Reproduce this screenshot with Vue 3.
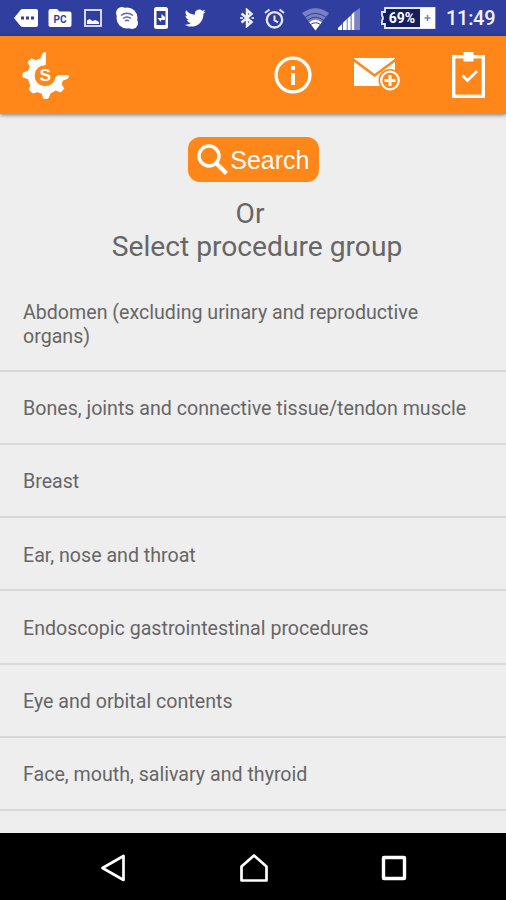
<script setup>
const groups = [
  'Abdomen (excluding urinary and reproductive organs)',
  'Bones, joints and connective tissue/tendon muscle',
  'Breast',
  'Ear, nose and throat',
  'Endoscopic gastrointestinal procedures',
  'Eye and orbital contents',
  'Face, mouth, salivary and thyroid',
]
</script>

<template>
  <div class="screen">
    <header class="status">
      <div class="notifications">
        <svg width="26" height="20" viewBox="0 0 26 20">
          <path d="M1 10 7.500 2Q8.500 1 10 1H23Q25 1 25 3V17Q25 19 23 19H10Q8.500 19 7.500 18Z" fill="#fff" />
          <path d="M8 8.500h3v3H8zM13 8.500h3v3h-3zM18 8.500h3v3h-3z" fill="#303f9f" />
        </svg>
        <svg class="folder" width="24" height="20" viewBox="0 0 24 20">
          <path d="M0.500 3Q0.500 1 2.500 1H9l2.500 2.500H21.500Q23.500 3.500 23.500 5.500V17Q23.500 19 21.500 19H2.500Q.500 19 .500 17Z" fill="#fff" />
          <text x="12" y="15" text-anchor="middle" class="folder-text">PC</text>
        </svg>
        <svg class="picture" width="18" height="18" viewBox="0 0 18 18">
          <rect x="1" y="1" width="16" height="16" fill="#303f9f" stroke="#e8eaf8" stroke-width="1.800" />
          <path d="M3 11.500 5.500 10l3 2 3-1 3.500 2v2H3Z" fill="#fff" />
        </svg>
        <svg class="hotspot" width="24" height="24" viewBox="0 0 24 24">
          <circle cx="12" cy="12" r="10.500" fill="#fff" />
          <circle cx="7" cy="7" r="6" fill="#fff" />
          <circle cx="17" cy="17" r="6" fill="#fff" />
          <path d="M6 9.500Q12 5 18 9.500M8 12.500Q12 9.500 16 12.500M10 15Q12 13.500 14 15" fill="none" stroke="#5b67b4" stroke-width="1.500" />
        </svg>
        <svg class="phone" width="16" height="24" viewBox="0 0 16 24">
          <rect x="1" y="1" width="14" height="22" rx="2.500" fill="#fff" />
          <path d="M3.500 5h9v14h-9z" fill="#303f9f" />
          <path d="M4.500 12h4V8l3.500 3v3H8v2Z" fill="#fff" />
        </svg>
        <svg class="bird" width="22" height="20" viewBox="0 0 24 20">
          <path d="M23.600 2.900c-.8.400-1.700.6-2.700.8 1-.6 1.700-1.500 2.100-2.600-.9.500-1.900.9-3 1.100A4.700 4.700 0 0 0 12 6.500c-4-.2-7.400-2-9.700-4.900-1.200 2.200-.6 4.900 1.500 6.300-.8 0-1.500-.2-2.200-.6 0 2.400 1.600 4.300 3.800 4.800-.7.200-1.400.2-2.100.1.600 1.900 2.300 3.200 4.400 3.300A9.600 9.600 0 0 1 .7 17.400c9.700 5.500 20.600-.9 20.500-12 1-.6 1.800-1.500 2.400-2.500Z" fill="#fff" />
        </svg>
      </div>
      <div class="system">
        <svg class="bluetooth" width="14" height="20" viewBox="0 0 14 20">
          <path d="M1.500 5.500 11.500 14 7 18V2L11.500 6 1.500 14.500" fill="none" stroke="#eef0fa" stroke-width="2.500" />
          <path d="M0 9h3v2H0zM11.500 9h2.500v2h-2.500z" fill="#c5cae9" />
        </svg>
        <svg class="alarm" width="21" height="21" viewBox="0 0 21 21">
          <circle cx="10.500" cy="11.800" r="7.700" fill="none" stroke="#e6e8f6" stroke-width="2.300" />
          <path d="M1 5 5.500 1.500M15.500 1.500 20 5M10.500 7.500v4.800l3.500 2" fill="none" stroke="#e6e8f6" stroke-width="2" />
        </svg>
        <svg class="wifi" width="27" height="23" viewBox="0 0 27 23">
          <path d="M0 5Q13.500-4.500 27 5L13.500 22.500Z" fill="#7781c3" />
          <path d="M3 9.200Q13.500 1.500 24 9.200" fill="none" stroke="#303f9f" stroke-width="1" />
          <path d="M5.500 12.300Q13.500 6 21.500 12.300" fill="none" stroke="#303f9f" stroke-width="1" />
          <path d="M7.300 14.300Q13.500 9 19.700 14.300L13.500 22.500Z" fill="#fff" />
          <path d="M8.500 16.500Q13.500 13 18.500 16.500" fill="none" stroke="#303f9f" stroke-width="1" />
        </svg>
        <svg class="signal" width="23" height="22" viewBox="0 0 23 22">
          <path d="M0 22v-2l4-4v6zM4.800 22v-7l4-4v11zM9.500 22V10.500l3.200-3V22zM13.500 22V6.500l3-3V22z" fill="#fff" />
          <path d="M17 22V3.500L22 0v22z" fill="#7b85c5" />
        </svg>
        <svg class="battery" width="56" height="22" viewBox="0 0 56 22">
          <path d="M5 1H54.500V21H5V17H2V13.500Q4 11 2 8.500V5H5Z" fill="#151d61" stroke="#e4e7f5" stroke-width="1.800" />
          <path d="M40 1h15v20H40z" fill="#fff" />
          <path d="M44.500 11h6M47.500 8v6" stroke="#7580b9" stroke-width="1.500" />
          <text x="22" y="16" text-anchor="middle" class="battery-text">69%</text>
        </svg>
        <span class="time">11:49</span>
      </div>
    </header>

    <nav class="toolbar">
      <svg class="logo" width="47" height="47" viewBox="66 46 141 141">
        <path d="M129 50 136 47V84A33 33 0 1 0 168 122L173 117H206L203 125 187 131 184 142 191 156 182 166 167 160 150 170 145 184 132 186 126 170 112 165 98 169 88 159 92 146 85 126 69 121V109L85 104 91 91 84 76 94 66 108 72 122 66Z" fill="#fff" stroke="#fff" stroke-width="3" stroke-linejoin="round" />
        <text x="136" y="134" text-anchor="middle" class="logo-text">S</text>
      </svg>
      <div class="actions">
        <svg width="38" height="38" viewBox="0 0 38 38">
          <circle cx="19" cy="19" r="16.900" fill="none" stroke="#fff" stroke-width="3.400" />
          <path d="M17 10h4v4h-4zM17 17h4v12h-4z" fill="#fff" />
        </svg>
        <svg class="mail" width="47" height="34" viewBox="0 0 47 34">
          <path d="M0 0H41V28H0Z" fill="#fff" />
          <path d="M-1 1.500 20.500 17.500 42 1.500" fill="none" stroke="#ff8619" stroke-width="2.600" />
          <circle cx="36" cy="22.500" r="11.500" fill="#ff8619" />
          <circle cx="36" cy="22.500" r="8.800" fill="none" stroke="#fff" stroke-width="2.200" />
          <path d="M36 17v11M30.500 22.500h11" stroke="#fff" stroke-width="3" />
        </svg>
        <svg width="33" height="46" viewBox="0 0 33 46">
          <rect x="1.700" y="4.700" width="29.600" height="39.600" fill="none" stroke="#fff" stroke-width="3.400" />
          <path d="M8 3h17v6.500H8z" fill="#ff8619" />
          <path d="M8 3h17v3.400H8zM11.500 0h10v9.500h-10z" fill="#fff" />
          <path d="M10.500 23.500 15.500 28.500 25 19" fill="none" stroke="#fff" stroke-width="2.700" />
        </svg>
      </div>
    </nav>

    <main class="content">
      <button class="search">
        <svg width="31" height="31" viewBox="0 0 31 31">
          <circle cx="12" cy="12" r="10" fill="none" stroke="#fff" stroke-width="3.400" />
          <path d="M19 19 29.500 29.500" stroke="#fff" stroke-width="4.200" />
        </svg>
        <span>Search</span>
      </button>
      <h1 class="heading"><span>Or</span><span>Select procedure group</span></h1>
      <ul class="list">
        <li v-for="g in groups" :key="g"><span>{{ g }}</span></li>
      </ul>
    </main>

    <footer class="navbar">
      <svg width="26" height="28" viewBox="0 0 26 28">
        <path d="M2.500 14 23.500 2V26Z" fill="none" stroke="#fff" stroke-width="2.700" stroke-linejoin="round" />
      </svg>
      <svg width="28" height="28" viewBox="0 0 28 28">
        <path d="M1.500 26.500V12.500L14 1.500 26.500 12.500V26.500Z" fill="none" stroke="#fff" stroke-width="2.700" stroke-linejoin="round" />
      </svg>
      <svg width="26" height="26" viewBox="0 0 26 26">
        <rect x="2.500" y="2.500" width="21" height="21" rx="0.500" fill="none" stroke="#fff" stroke-width="3.400" />
      </svg>
    </footer>
  </div>
</template>

<style>
body {
  margin: 0;
}
</style>

<style scoped>
.screen {
  width: 506px;
  height: 900px;
  display: flex;
  flex-direction: column;
  overflow: hidden;
  background: #eee;
  font-family: Roboto, sans-serif;
  color: #666;
}
svg {
  display: block;
  flex: none;
}
.status {
  height: 36px;
  flex: none;
  box-sizing: border-box;
  padding: 0 11px 0 13px;
  display: flex;
  justify-content: space-between;
  align-items: center;
  background: #303f9f;
}
.notifications {
  display: flex;
  align-items: center;
}
.folder {
  margin-left: 9px;
}
.picture {
  margin-left: 12px;
}
.hotspot {
  margin-left: 13px;
}
.phone {
  margin-left: 14px;
}
.bird {
  margin-left: 15px;
}
.folder-text {
  font: bold 10px Roboto, sans-serif;
  fill: #303f9f;
}
.system {
  display: flex;
  align-items: center;
}
.alarm {
  margin-left: 10px;
}
.wifi {
  margin-left: 17px;
  margin-top: 3px;
}
.signal {
  margin-left: 9px;
  margin-top: 1px;
}
.battery {
  margin-left: 19px;
}
.battery-text {
  font: bold 14px Roboto, sans-serif;
  fill: #fff;
}
.time {
  width: 49px;
  margin-left: 10px;
  font-size: 20px;
  font-weight: 500;
  line-height: 24px;
  letter-spacing: -0.3px;
  color: #f2f3fc;
  white-space: nowrap;
}
.toolbar {
  height: 78px;
  flex: none;
  box-sizing: border-box;
  padding: 0 21px 0 22px;
  display: flex;
  align-items: center;
  justify-content: space-between;
  background: #ff8619;
  box-shadow: 0 1px 4px rgba(0, 0, 0, 0.5);
}
.logo-text {
  font: bold 52px "Liberation Sans", sans-serif;
  fill: #fff;
}
.actions {
  width: 211px;
  display: flex;
  align-items: center;
  justify-content: space-between;
}
.mail {
  margin-right: 9px;
}
.content {
  flex: 1;
  min-height: 0;
  padding-top: 23px;
  display: flex;
  flex-direction: column;
  align-items: center;
}
.search {
  width: 131px;
  height: 45px;
  flex: none;
  box-sizing: border-box;
  margin: 0;
  padding: 0 9px;
  border: 0;
  border-radius: 12px;
  display: flex;
  align-items: center;
  justify-content: space-between;
  background: #ff8619;
  color: #fff;
  font: 25px/30px "Liberation Sans", sans-serif;
}
.heading {
  margin: 15px 0 0;
  padding-left: 8px;
  display: flex;
  flex-direction: column;
  align-items: center;
  font-size: 28.200px;
  line-height: 33px;
  font-weight: 400;
}
.heading span:first-child {
  margin-right: 14px;
}
.list {
  width: 100%;
  margin: 13px 0 0;
  padding: 0;
  list-style: none;
}
.list li {
  height: 73.170px;
  box-sizing: border-box;
  padding: 3px 30px 0 23px;
  display: flex;
  align-items: center;
  border-bottom: 2px solid #d8d8d8;
  font-size: 19.620px;
  line-height: 23.500px;
}
.list li:first-child {
  height: 96px;
}
.navbar {
  height: 67px;
  flex: none;
  box-sizing: border-box;
  padding: 3px 99px 0 100px;
  display: flex;
  align-items: center;
  justify-content: space-between;
  background: #000;
}
</style>
